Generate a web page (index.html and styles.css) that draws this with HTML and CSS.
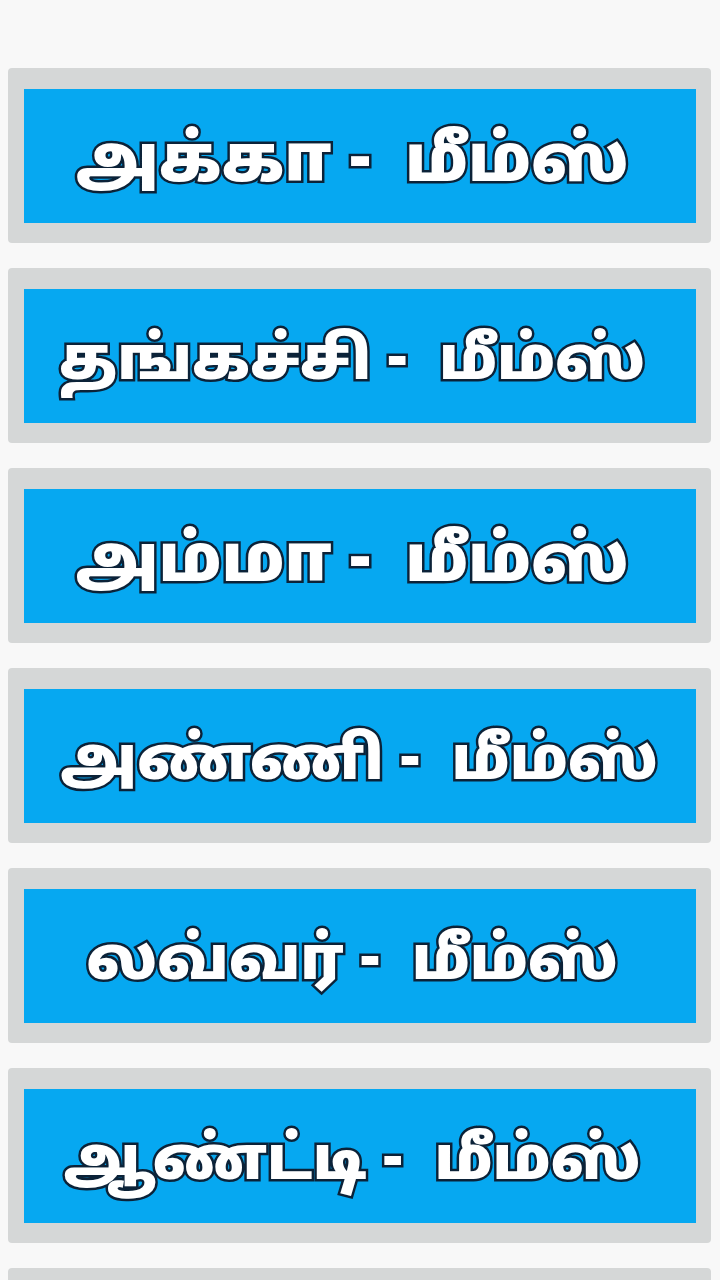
FILE: index.html
```html
<!DOCTYPE html>
<html lang="ta">
<head>
<meta charset="utf-8">
<link rel="stylesheet" href="styles.css">
</head>
<body>
<main class="list">
  <a class="card"><span class="panel"><span class="label label-lg">அக்கா -  மீம்ஸ்</span></span></a>
  <a class="card"><span class="panel"><span class="label">தங்கச்சி -  மீம்ஸ்</span></span></a>
  <a class="card"><span class="panel"><span class="label label-lg">அம்மா -  மீம்ஸ்</span></span></a>
  <a class="card"><span class="panel panel-shift"><span class="label">அண்ணி -  மீம்ஸ்</span></span></a>
  <a class="card"><span class="panel"><span class="label">லவ்வர் -  மீம்ஸ்</span></span></a>
  <a class="card"><span class="panel"><span class="label">ஆண்ட்டி -  மீம்ஸ்</span></span></a>
  <a class="card"><span class="panel"></span></a>
</main>
</body>
</html>
```
FILE: styles.css
```css
html, body {
  margin: 0;
  padding: 0;
  background: #f8f8f8;
  height: 1280px;
  overflow: hidden;
}
.list {
  display: flex;
  flex-direction: column;
  gap: 25px;
  padding: 68px 9px 0 8px;
}
.card {
  display: block;
  background: #d5d7d7;
  border-radius: 4px;
  padding: 21px 15px 20px 16px;
  height: 175px;
  box-sizing: border-box;
  flex-shrink: 0;
}
.panel {
  display: flex;
  align-items: center;
  justify-content: center;
  height: 134px;
  box-sizing: border-box;
  background: #06a8f1;
  padding: 16px 16px 0 0;
}
.panel-shift {
  padding-right: 2px;
}
.label {
  font-family: "Noto Sans Tamil", "Noto Sans", "Lato", sans-serif;
  font-weight: 900;
  font-size: 60px;
  color: #ffffff;
  white-space: pre;
  -webkit-text-stroke: 5px #0b2238;
  paint-order: stroke fill;
  line-height: 1;
}
.label-lg {
  font-size: 65px;
}
```
